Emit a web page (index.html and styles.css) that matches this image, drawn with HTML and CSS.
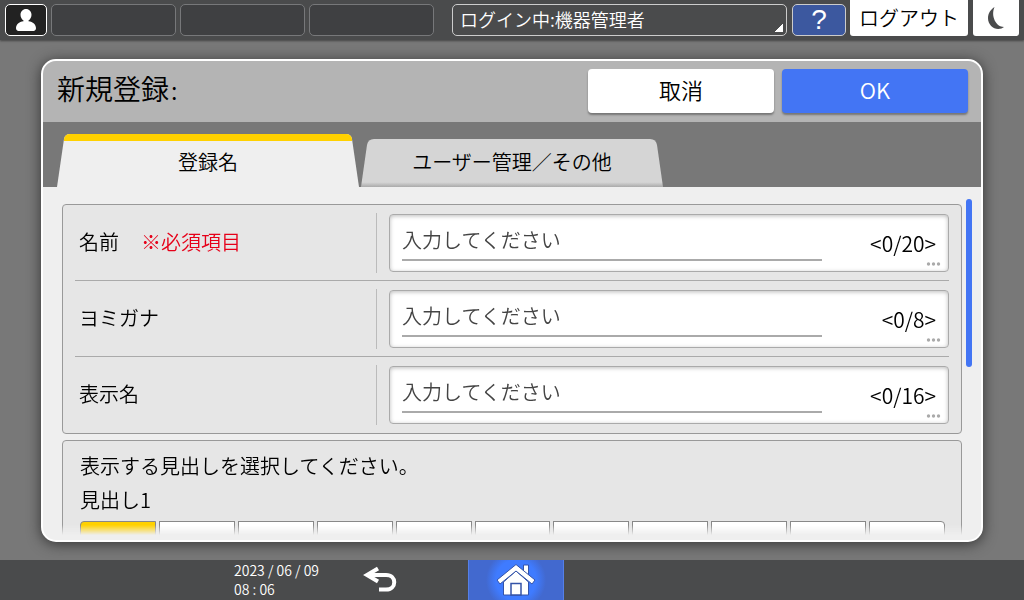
FILE: index.html
```html
<!DOCTYPE html>
<html lang="ja">
<head>
<meta charset="utf-8">
<title>新規登録</title>
<link rel="stylesheet" href="styles.css">
</head>
<body>
<header class="topbar">
  <button class="user" aria-label="ユーザー"><svg viewBox="0 0 24 26" width="24" height="26"><path fill="#fff" d="M12 2c3.100 0 5.500 2.500 5.500 5.800 0 2.400-1.200 4.600-3 5.600v.8c4.500.2 7.500 3.500 7.500 7 0 2-1.500 2.800-4 2.800H6c-2.500 0-4-.8-4-2.800 0-3.500 3-6.800 7.500-7v-.8c-1.800-1-3-3.200-3-5.600C6.500 4.500 8.900 2 12 2z"/></svg></button>
  <div class="slot"></div>
  <div class="slot"></div>
  <div class="slot"></div>
  <button class="login">ログイン中:機器管理者</button>
  <button class="help">?</button>
  <button class="light logout">ログアウト</button>
  <button class="light sleep" aria-label="スリープ"><svg viewBox="0 0 18 24" width="18" height="24"><path fill="#4a4b4c" d="M7.500 1C3.500 3.500 1 7.500 1 12.300 1 18.500 6 23 11.200 23c2.500 0 4.300-.8 5.800-2C9 21 3.500 10 7.500 1z"/></svg></button>
</header>
<main class="stage">
  <section class="dialog">
    <div class="dialog-head">
      <h1>新規登録<span class="colon">:</span></h1>
      <button class="action">取消</button>
      <button class="action ok">OK</button>
    </div>
    <nav class="tabs">
      <button class="tab active"><svg class="tab-shape" viewBox="0 0 302 53" preserveAspectRatio="none"><path fill="#efefef" d="M0 53 7 5q1-5 6-5h276q5 0 6 5l7 48z"/><path fill="#ffd100" d="M7 7V5q1-5 6-5h276q5 0 6 5v2z"/></svg><span>登録名</span></button>
      <button class="tab"><svg class="tab-shape" viewBox="0 0 302 48" preserveAspectRatio="none"><defs><linearGradient id="shade" x1="0" y1="0" x2="0" y2="1"><stop offset=".9" stop-color="#d5d5d5"/><stop offset="1" stop-color="#aaa"/></linearGradient></defs><path fill="url(#shade)" d="M0 48 6 6q1-6 7-6h276q6 0 7 6l6 42z"/></svg><span>ユーザー管理／その他</span></button>
    </nav>
    <div class="content">
      <div class="scroller">
        <form class="card fields">
          <div class="row">
            <label for="name">名前<em>※必須項目</em></label>
            <div class="field"><input id="name" placeholder="入力してください"><output for="name">&lt;0/20&gt;</output><svg class="dots" viewBox="0 0 15 4" width="15" height="4"><g fill="#aaa"><circle cx="2.500" cy="2" r="1.700"/><circle cx="7.500" cy="2" r="1.700"/><circle cx="12.500" cy="2" r="1.700"/></g></svg></div>
          </div>
          <div class="row">
            <label for="kana">ヨミガナ</label>
            <div class="field"><input id="kana" placeholder="入力してください"><output for="kana">&lt;0/8&gt;</output><svg class="dots" viewBox="0 0 15 4" width="15" height="4"><g fill="#aaa"><circle cx="2.500" cy="2" r="1.700"/><circle cx="7.500" cy="2" r="1.700"/><circle cx="12.500" cy="2" r="1.700"/></g></svg></div>
          </div>
          <div class="row">
            <label for="display">表示名</label>
            <div class="field"><input id="display" placeholder="入力してください"><output for="display">&lt;0/16&gt;</output><svg class="dots" viewBox="0 0 15 4" width="15" height="4"><g fill="#aaa"><circle cx="2.500" cy="2" r="1.700"/><circle cx="7.500" cy="2" r="1.700"/><circle cx="12.500" cy="2" r="1.700"/></g></svg></div>
          </div>
        </form>
        <div class="card headings">
          <p>表示する見出しを選択してください。</p>
          <p>見出し1</p>
          <div class="keys">
            <button class="selected"></button><button></button><button></button><button></button><button></button><button></button><button></button><button></button><button></button><button></button><button></button>
          </div>
        </div>
      </div>
      <div class="scrollbar"></div>
    </div>
  </section>
</main>
<footer class="bottombar">
  <div class="left">
    <time datetime="2023-06-09T08:06">2023 / 06 / 09<br>08 : 06</time>
    <button class="back" aria-label="戻る"><svg viewBox="0 0 34 28" width="34" height="28"><path fill="none" stroke="#fff" stroke-width="4" d="M6 9h17c11 0 11 14.500 0 14.500h-7M15 2.500 4 9l11 6.500"/></svg></button>
  </div>
  <button class="home" aria-label="ホーム"><svg viewBox="0 0 40 34" width="40" height="34"><g fill="#fff" stroke="#3453a8" stroke-width="1"><path d="M27.500 2h5v14h-5z"/><path d="M7.500 19 20 8l12.500 11v13h-25z"/><path d="M20 1.500 39 17l-3 4L20 8 4 21l-3-4z"/><path stroke-width="1.500" d="M15 20.500h10V32H15z"/></g></svg></button>
  <div></div>
</footer>
</body>
</html>
```
FILE: styles.css
```css
* { box-sizing: border-box; }
body {
  margin: 0;
  height: 100vh;
  display: flex;
  flex-direction: column;
  overflow: hidden;
  background: #787878;
  color: #000;
  font: 350 20px/28px "Noto Sans CJK JP", sans-serif;
}
button, input { font: inherit; color: inherit; }
button { padding: 0; border: 0; background: none; }
svg { display: block; }
h1, p { margin: 0; font-weight: inherit; }

.topbar {
  display: flex;
  gap: 4px;
  height: 40px;
  flex: none;
  padding: 0 5px;
  background: #4a4b4c;
  box-shadow: 0 1px 2px #444;
}
.topbar > * { height: 32px; margin-top: 4px; border-radius: 5px; }
.user { width: 42px; border: 1px solid #fff; background: #222; display: grid; place-items: center; }
.slot { flex: 1 1 125px; border: 1px solid #77787a; background: #3f4042; }
.login {
  flex: 3 1 335px;
  margin-left: 14px;
  padding: 0 7px 2px;
  border: 1px solid #ccc;
  color: #fff;
  font-size: 18px;
  text-align: left;
  background: linear-gradient(135deg, transparent 50%, #fff 50%) right 3px bottom 3px / 8px 8px no-repeat;
}
.help { width: 54px; margin-left: 1px; border: 1px solid #ccc; background: #3c589f; color: #fff; font: 28px/30px "Liberation Sans", sans-serif; }
.topbar .light { height: 36px; margin-top: 0; border-radius: 0 0 3px 3px; background: #fff; }
.logout { width: 118px; }
.topbar .sleep { width: 46px; margin-left: 1px; display: grid; place-items: center; }

.stage { flex: 1; min-height: 0; padding: 19px 41px 18px; display: flex; }
.dialog {
  flex: 1;
  min-width: 0;
  display: flex;
  flex-direction: column;
  border: 2px solid #fff;
  border-radius: 15px;
  background: #efefef;
  overflow: hidden;
  box-shadow: 0 2px 14px #333;
}
.dialog-head { flex: none; display: flex; gap: 8px; height: 61px; padding: 8px 13px 9px 14px; background: #b4b4b4; }
.dialog-head h1 { flex: 1; font-size: 28px; line-height: 38px; }
.colon { margin-left: 2px; font-size: 24px; }
.action { width: 186px; height: 44px; padding-bottom: 4px; border-radius: 4px; background: #fff; font-size: 22px; line-height: 36px; box-shadow: 0 2px 2px #777; }
.ok { background: #4375f4; color: #fff; }

.tabs { flex: none; display: flex; align-items: flex-end; gap: 2px; height: 65px; padding-left: 14px; background: #787878; }
.tab { position: relative; width: 302px; height: 48px; padding-bottom: 2px; }
.tab.active { height: 53px; padding: 2px 0 0; }
.tab-shape { position: absolute; inset: 0; width: 100%; height: 100%; }
.tab span { position: relative; }

.content { flex: 1; min-height: 0; display: flex; gap: 4px; padding: 0 9px 5px 19px; }
.scroller {
  flex: 1;
  min-width: 0;
  padding-top: 17px;
  overflow: hidden;
  -webkit-mask-image: linear-gradient(to top, transparent, #000 10px);
  mask-image: linear-gradient(to top, transparent, #000 10px);
}
.scrollbar { width: 6px; height: 168px; margin-top: 12px; border-radius: 3px; background: #4375f4; }
.card { border: 1px solid #999; border-radius: 4px; background: #e6e6e6; }
.fields { padding: 0 12px 1px; }
.row { display: flex; align-items: center; height: 75px; }
.row + .row { height: 76px; border-top: 1px solid #aaa; }
.row label { flex: 1 1 302px; height: 60px; padding-left: 4px; line-height: 58px; border-right: 1px solid #bbb; }
.row em { margin-left: 22px; color: #e60019; font-style: normal; }
.field {
  position: relative;
  flex: 2 1 560px;
  height: 58px;
  margin-left: 12px;
  padding: 0 12px;
  display: flex;
  align-items: center;
  border: 1px solid #aaa;
  border-radius: 4px;
  background: #fff;
  box-shadow: inset 0 1px 4px #bbb;
}
.field input { flex: 1; min-width: 0; height: 36px; margin-right: 44px; padding: 0 0 4px; border: 0; border-bottom: 2px solid #aaa; background: none; outline: 0; }
.field input::placeholder { color: #444; opacity: 1; }
.field output { width: 70px; text-align: right; font-size: 21px; }
.dots { position: absolute; right: 7px; bottom: 5px; }
.headings { height: 160px; margin-top: 6px; padding: 8px 16px 0 17px; }
.headings p { height: 34px; line-height: 34px; }
.keys { display: grid; grid-template-columns: repeat(11, 1fr); gap: 3px; margin-top: 4px; }
.keys button { height: 44px; border: 1px solid #888; background: #fff; }
.keys button:first-child { border-top-left-radius: 4px; }
.keys button:last-child { border-top-right-radius: 4px; }
.keys .selected { background: #ffd100; }

.bottombar { flex: none; display: grid; grid-template-columns: 1fr 96px 1fr; height: 40px; margin-right: -8px; background: #4a4b4c; color: #fff; }
.left { display: flex; justify-content: flex-end; gap: 44px; padding-right: 71px; }
time { font-size: 14px; line-height: 19px; padding-top: 1px; white-space: nowrap; }
.back { display: grid; place-items: center; }
.home { display: grid; place-items: center; border: solid #5580e8; border-width: 0 1px; background: radial-gradient(circle, #3f7bff 20px, #4269cf 30px); }
```
